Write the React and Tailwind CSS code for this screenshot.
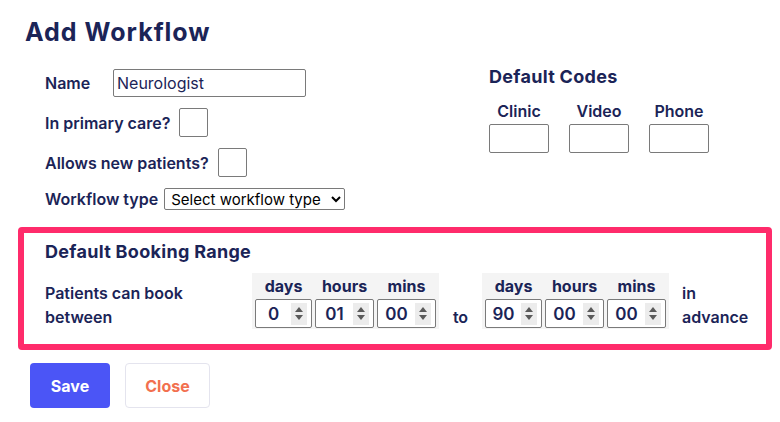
import { useState } from "react";

const navy = "text-[#1b2457]";

const Spinner = () => (
  <span className="flex h-[22px] w-[16px] flex-col items-center justify-center gap-[3px] bg-[#ececec]">
    <svg width="8" height="5" viewBox="0 0 8 5">
      <path d="M4 0L8 5H0z" fill="#5a5a5a" />
    </svg>
    <svg width="8" height="5" viewBox="0 0 8 5">
      <path d="M0 0h8L4 5z" fill="#5a5a5a" />
    </svg>
  </span>
);

const NumBox = ({ value, w }) => (
  <div
    className={`flex h-[29px] items-center rounded-[2px] border border-[#7a7a7a] bg-white pr-[4px] ${w}`}
  >
    <span className={`flex-1 text-center text-[17px] ${navy}`}>{value}</span>
    <Spinner />
  </div>
);

const RangeGroup = ({ values }) => (
  <div className="flex flex-col bg-[#f4f4f4] px-[3px] pb-[1px]">
    <div className={`flex gap-[3px] text-[16px] font-bold ${navy}`}>
      <span className="w-[57px] text-center leading-[26px]">days</span>
      <span className="w-[59px] text-center leading-[26px]">hours</span>
      <span className="w-[59px] text-center leading-[26px]">mins</span>
    </div>
    <div className="flex gap-[3px]">
      <NumBox value={values[0]} w="w-[57px]" />
      <NumBox value={values[1]} w="w-[59px]" />
      <NumBox value={values[2]} w="w-[59px]" />
    </div>
  </div>
);

const Box = ({ className }) => (
  <input
    type="text"
    className={`rounded-[2px] border border-[#7a7a7a] bg-white outline-none ${className}`}
  />
);

export default function App() {
  const [name, setName] = useState("Neurologist");

  return (
    <div
      className={`min-h-[422px] w-[780px] bg-white ${navy}`}
      style={{ fontFamily: "Inter, 'Noto Sans', sans-serif" }}
    >
      <div className="pl-[25px] pt-[16px]">
        <h1 className="text-[25px] font-bold leading-[32px] tracking-[1px]">
          Add Workflow
        </h1>
      </div>

      <div className="mt-[21px] flex">
        {/* left form */}
        <div className="flex w-[443px] flex-col gap-[11px] pl-[45px] text-[16px] font-semibold">
          <div className="flex h-[28px] items-center">
            <span className="w-[68px]">Name</span>
            <input
              value={name}
              onChange={(e) => setName(e.target.value)}
              className={`h-[28px] w-[193px] rounded-[2px] border border-[#7a7a7a] px-[3px] text-[16px] font-normal outline-none ${navy}`}
            />
          </div>
          <div className="flex h-[29px] items-center gap-[9px]">
            <span>In primary care?</span>
            <Box className="h-[29px] w-[29px]" />
          </div>
          <div className="flex h-[29px] items-center gap-[9px]">
            <span>Allows new patients?</span>
            <Box className="h-[29px] w-[29px]" />
          </div>
          <div className="flex h-[22px] items-center gap-[6px]">
            <span>Workflow type</span>
            <select className="h-[22px] w-[181px] rounded-[2px] border border-[#7a7a7a] bg-white px-[2px] text-[15px] font-normal text-black">
              <option>Select workflow type</option>
            </select>
          </div>
        </div>

        {/* default codes */}
        <div className="flex flex-col pl-[46px]">
          <h2 className="-mt-[3px] text-[18px] font-bold leading-[22px] tracking-[0.3px]">
            Default Codes
          </h2>
          <div className="mt-[12px] flex gap-[20px] text-[16px] font-semibold">
            {["Clinic", "Video", "Phone"].map((c) => (
              <div key={c} className="flex flex-col items-center">
                <span className="leading-[22px]">{c}</span>
                <Box className="mt-[2px] h-[29px] w-[60px]" />
              </div>
            ))}
          </div>
        </div>
      </div>

      {/* booking range */}
      <div className="ml-[18px] mt-[17px] w-[754px] rounded-[4px] border-[6px] border-[#ff2b6b] pb-[15px] pl-[21px] pt-[8px]">
        <h2 className="text-[18px] font-bold leading-[22px] tracking-[0.3px]">
          Default Booking Range
        </h2>
        <div className="mt-[10px] flex items-end text-[16px] font-semibold leading-[24px]">
          <div className="w-[207px]">
            Patients can book
            <br />
            between
          </div>
          <RangeGroup values={["0", "01", "00"]} />
          <span className="w-[43px] text-center">to</span>
          <RangeGroup values={["90", "00", "00"]} />
          <div className="pl-[13px]">
            in
            <br />
            advance
          </div>
        </div>
      </div>

      <div className="ml-[30px] mt-[13px] flex gap-[15px]">
        <button className="h-[45px] w-[80px] rounded-[4px] bg-[#4b55f6] text-[16px] font-bold text-white">
          Save
        </button>
        <button className="h-[45px] w-[85px] rounded-[4px] border border-[#e4e4ee] bg-white text-[16px] font-bold text-[#f2704f]">
          Close
        </button>
      </div>
    </div>
  );
}
